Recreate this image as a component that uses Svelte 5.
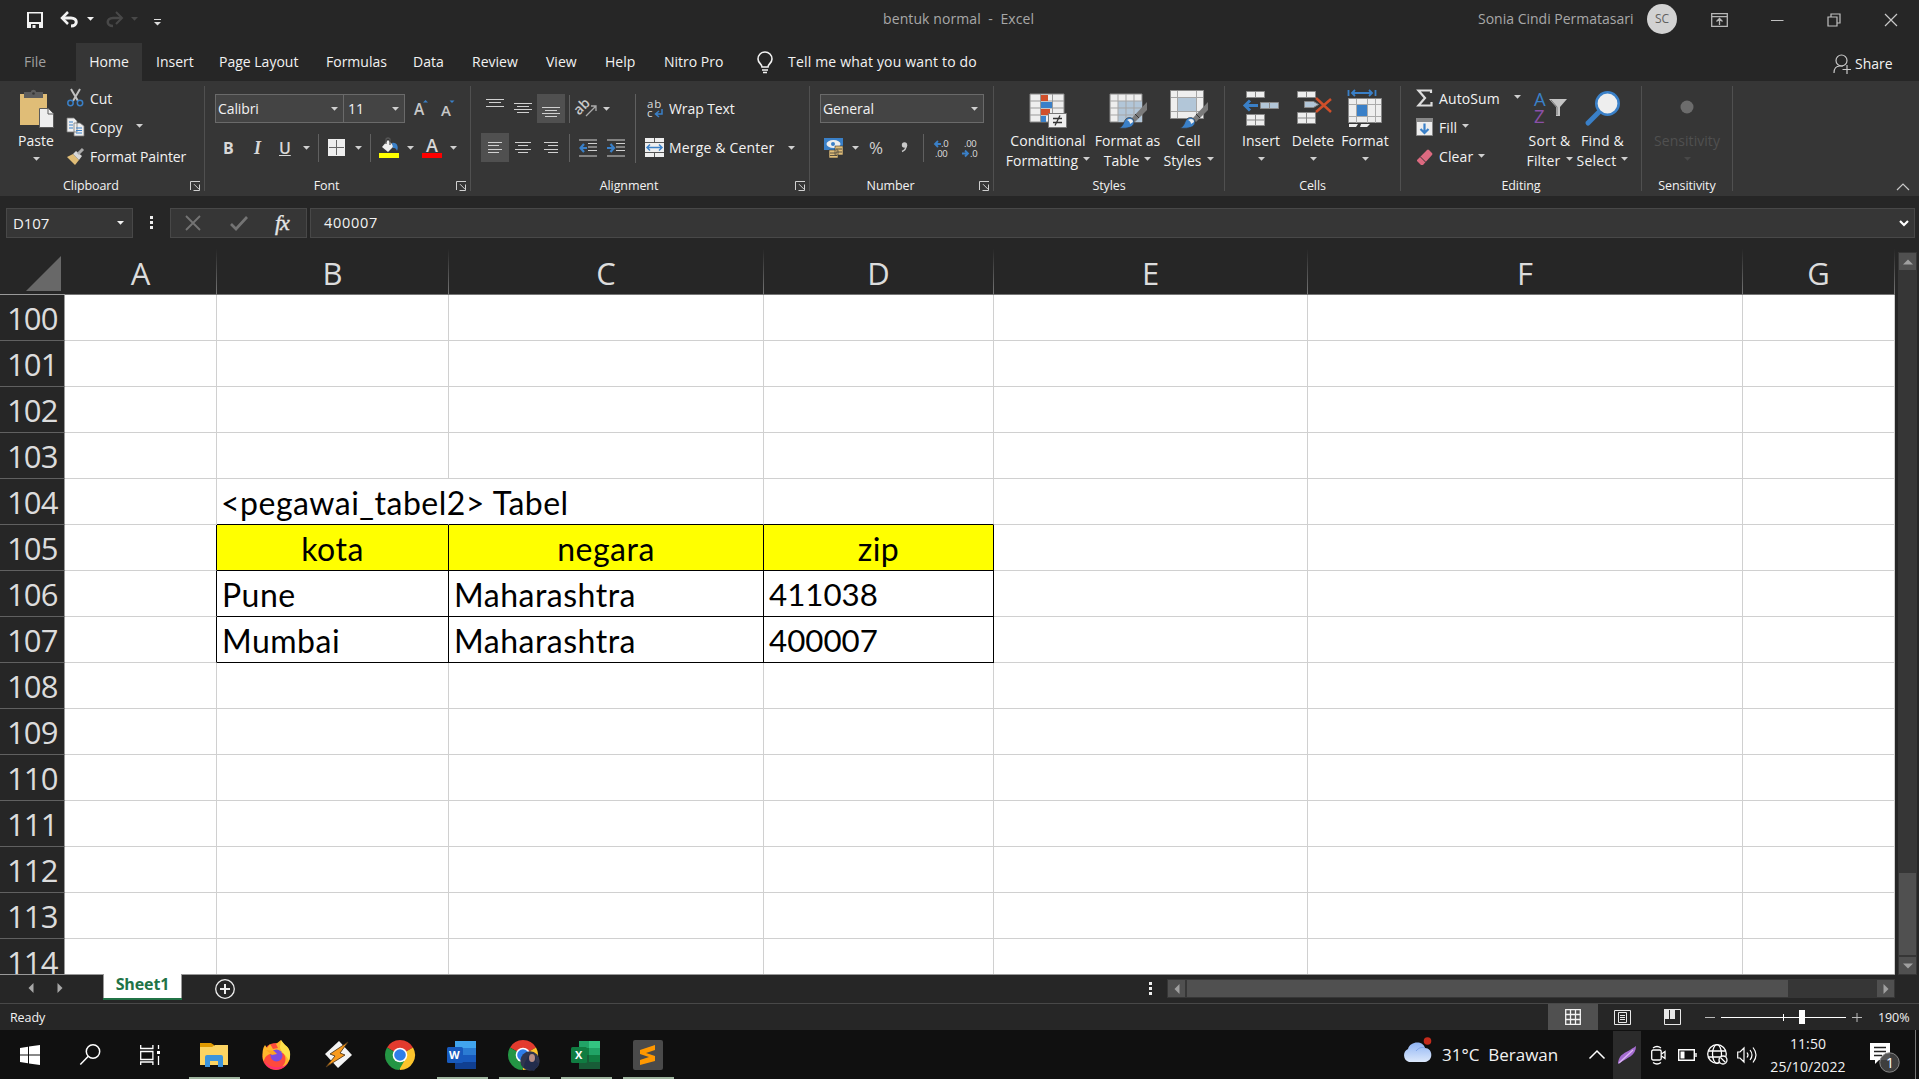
<script>
  const columns = ['A', 'B', 'C', 'D', 'E', 'F', 'G'];
  const rows = Array.from({ length: 15 }, (_, i) => 100 + i);
  const cells = {
    B104: '<pegawai_tabel2> Tabel',
    B105: 'kota', C105: 'negara', D105: 'zip',
    B106: 'Pune', C106: 'Maharashtra', D106: '411038',
    B107: 'Mumbai', C107: 'Maharashtra', D107: '400007'
  };
  const inTable = (c, r) => 'BCD'.includes(c) && r >= 105 && r <= 107;
  const tabs = ['Insert', 'Page Layout', 'Formulas', 'Data', 'Review', 'View', 'Help', 'Nitro Pro'];
</script>

{#snippet caret()}
  <svg class="caret" width="7" height="4" viewBox="0 0 7 4"><path d="M0 0h7L3.5 3.7z" fill="currentColor" /></svg>
{/snippet}

{#snippet launcher()}
  <svg class="launcher" width="11" height="10" viewBox="0 0 11 10" fill="none" stroke="#d0d0d0"><path d="M.5 9V.5H10M4 3.2l5 5M9.5 3.5v6h-6" /></svg>
{/snippet}

{#snippet chrome()}
  <path d="M15 15 2 7.5A15 15 0 0 1 28 7.500z" fill="#e33b2e" />
  <path d="M15 15 28 7.500A15 15 0 0 1 15 30L9 19z" fill="#fcc42c" />
  <path d="M2 7.500A15 15 0 0 0 14 30l7-12-6-3z" fill="#249544" />
  <circle cx="15" cy="15" r="7.300" fill="#fff" /><circle cx="15" cy="15" r="5.800" fill="#2f7de9" />
{/snippet}

{#snippet brush()}
  <path d="M38 12 22 29l4 3L38 20z" fill="#7a7a7a" /><path d="m26 24 4 4" stroke="#363636" />
  <path d="M10 38c5-2 4-6 7-9 3-3 8-1 8 3 0 5-6 7-15 6z" fill="#3a80c8" stroke="#363636" stroke-width=".7" />
  <path d="M18 30c3-2 6-1 6 2l-3 2c0-2-1-3-3-4z" fill="#eee" />
{/snippet}

<div class="app">
  <header class="title">
    <svg width="16" height="16" viewBox="0 0 16 16"><path d="M0 0h16v16H0zM2 1.500v8.500h12V1.500zM4 12v4h1.500v-3h3v3H12v-4z" fill="#f2f2f2" fill-rule="evenodd" /></svg>
    <svg width="19" height="16" viewBox="0 0 19 16" fill="none" stroke="#f2f2f2"><path d="M2 6h9c7 0 7 8 0 8" stroke-width="3" /><path d="M8 0 2 6l6 6" stroke-width="2.500" /></svg>
    {@render caret()}
    <svg width="19" height="16" viewBox="0 0 19 16" fill="none" stroke="#484848"><path d="M17 6H8C1 6 1 14 8 14" stroke-width="2.500" /><path d="m11 0 6 6-6 6" stroke-width="2" /></svg>
    <span class="off">{@render caret()}</span>
    <svg class="more" width="7" height="8" viewBox="0 0 7 8"><path d="M0 .5h7" stroke="#ddd" /><path d="M0 3h7L3.500 6.500z" fill="#ddd" /></svg>
    <span class="doc">bentuk normal&nbsp; -&nbsp; Excel</span>
    <span class="user">Sonia Cindi Permatasari</span>
    <span class="avatar">SC</span>
    <svg width="17" height="14" viewBox="0 0 17 14" fill="none" stroke="#b8b8b8" stroke-width="1.300"><path d="M.7.700h15.600v12.600H.7zM1 3.700h15M8.500 12V6M5.500 8.500l3-3 3 3" /></svg>
    <svg width="13" height="14" viewBox="0 0 13 14"><path d="M0 7.500h12.500" stroke="#c0c0c0" /></svg>
    <svg width="14" height="14" viewBox="0 0 14 14" fill="none" stroke="#c0c0c0" stroke-width="1.200"><path d="M1 4h9v9H1zM4 4V1h9v9h-3" /></svg>
    <svg width="14" height="14" viewBox="0 0 14 14"><path d="m1 1 12 12M13 1 1 13" stroke="#c8c8c8" stroke-width="1.200" /></svg>
  </header>

  <nav class="tabs">
    <span class="file">File</span>
    <span class="active">Home</span>
    {#each tabs as tab}<span>{tab}</span>{/each}
    <svg width="16" height="22" viewBox="0 0 16 22" fill="none" stroke="#f2f2f2" stroke-width="1.600"><path d="M5 15c0-3-4-4-4-8a7 7 0 0 1 14 0c0 4-4 5-4 8zM5 18h6M6 20.500h4" /></svg>
    <span class="tell">Tell me what you want to do</span>
    <svg width="19" height="20" viewBox="0 0 19 20" fill="none" stroke="#c8c8c8" stroke-width="1.200"><circle cx="8.500" cy="6.500" r="5.500" /><path d="M1 19c0-5 3-7 6-7h3M9.500 15.500H18M14 11v9" /></svg>
    <span class="share">Share</span>
  </nav>

  <section class="ribbon">
    <div class="group clipboard">
      <div class="body">
        <div class="big">
          <svg width="38" height="38" viewBox="0 0 38 38"><path d="M3 4h27v31H3z" fill="#e0bd77" /><path d="M7 2h7c0-3 5-3 5 0h7v6H7z" fill="#5d5d5d" /><circle cx="16.500" cy="3.500" r="1.300" fill="#363636" /><path d="M22.500 18.500h9l5 5v14h-14z" fill="#eee" stroke="#5a5a5a" /><path d="M31 18v6h6" fill="none" stroke="#5a5a5a" /></svg>
          <span>Paste</span><span>{@render caret()}</span>
        </div>
        <div class="list">
          <div><svg width="17" height="18" viewBox="0 0 17 18" fill="none"><path d="m4 0 7 12M13 0 6 12" stroke="#c0c0c0" stroke-width="2" /><circle cx="3.500" cy="14" r="2.700" stroke="#3a80c8" stroke-width="1.500" /><circle cx="13" cy="14" r="2.700" stroke="#3a80c8" stroke-width="1.500" /></svg>Cut</div>
          <div><svg width="17" height="18" viewBox="0 0 17 18"><path d="M0 0h7l3 3v11H0zM7 5h6l4 3v10H7z" fill="#eee" stroke="#777" stroke-width=".8" /><path d="M2 4h4M2 7h4M2 10h4M9 10h6M9 12.500h6M9 15h6" stroke="#3a80c8" /></svg>Copy<i class="gap"></i>{@render caret()}</div>
          <div><svg width="17" height="18" viewBox="0 0 17 18"><path d="M0 9 6 6l6 6-4 5z" fill="#e0bd77" /><path d="m6 6 3-3 6 5-3 4z" fill="#d8d8d8" /><path d="m11 6 5-5" stroke="#aaa" stroke-width="3" /></svg>Format Painter</div>
        </div>
      </div>
      <div class="label"><span>Clipboard</span>{@render launcher()}</div>
    </div>

    <div class="group font">
      <div class="body two">
        <div class="line fline1">
          <div class="select">Calibri{@render caret()}</div>
          <div class="select size">11{@render caret()}</div>
          <svg width="15" height="18" viewBox="0 0 15 18"><text x="0" y="15" font-size="15.500" font-weight="600" fill="#c8c8c8">A</text><path d="M9 2.500h5L11.500 0z" fill="#3a80c8" /></svg>
          <svg width="15" height="18" viewBox="0 0 15 18"><text x="0" y="15.500" font-size="15" font-weight="600" fill="#c8c8c8">A</text><path d="M8.500.500h5L11 3z" fill="#3a80c8" /></svg>
        </div>
        <div class="line fline2">
          <b>B</b><em>I</em><u>U</u>{@render caret()}<i class="rule"></i>
          <svg width="17" height="17" viewBox="0 0 17 17"><path d="M0 0h17v17H0z" fill="#eee" /><path d="M8.500 1v15M1 8.500h15" stroke="#666" /></svg>{@render caret()}<i class="rule"></i>
          <svg width="20" height="20" viewBox="0 0 20 20"><path d="m3 9 6-7 6 6-6 6z" fill="#eee" /><path d="M7 6V1q2-2 4 0v6" fill="none" stroke="#555" stroke-width="1.300" /><path d="M13 5c5-1 7 4 5 8-1-3-2-3-4-3z" fill="#3a80c8" /><path d="M0 15h20v5H0z" fill="#ff0" /></svg>{@render caret()}
          <svg width="20" height="20" viewBox="0 0 20 20"><text x="4" y="13.500" font-size="18" font-weight="600" fill="#d8d8d8">A</text><path d="M0 15h20v5H0z" fill="red" /></svg>{@render caret()}
        </div>
      </div>
      <div class="label"><span>Font</span>{@render launcher()}</div>
    </div>

    <div class="group align">
      <div class="body two">
        <div class="split">
          <div>
            <div class="line aline1">
              <svg width="18" height="29" viewBox="0 0 18 29"><path d="M0 5.500h18M3 8.500h12M0 12.500h18" class="s" /></svg>
              <svg width="18" height="29" viewBox="0 0 18 29"><path d="M0 9.500h18M3 12.500h12M0 15.500h18M3 18.500h12" class="s" /></svg>
              <span class="on"><svg width="18" height="29" viewBox="0 0 18 29"><path d="M0 13.500h18M3 16.500h12M0 19.500h18M3 22.500h12" class="s" /></svg></span>
              <i class="rule"></i>
              <svg width="19" height="18" viewBox="0 0 19 18"><text x="-2" y="9.500" font-size="14" transform="rotate(-45 7 9)" font-weight="600" fill="#c8c8c8">ab</text><path d="M8 16 18 6M13 6h5v5" fill="none" stroke="#aaa" stroke-width="1.300" /></svg>
              {@render caret()}
            </div>
            <div class="line aline2">
              <span class="on"><svg width="14" height="12" viewBox="0 0 14 12"><path d="M0 .5h14M0 3.500h11M0 7.500h14M0 10.500h11" class="s" /></svg></span>
              <svg width="16" height="12" viewBox="0 0 16 12"><path d="M0 .5h16M3 3.500h10M0 7.500h16M3 10.500h10" class="s" /></svg>
              <svg width="14" height="12" viewBox="0 0 14 12"><path d="M0 .5h14M4 3.500h10M0 7.500h14M4 10.500h10" class="s" /></svg>
              <i class="rule"></i>
              <svg width="18" height="18" viewBox="0 0 18 18"><path d="M0 1h18M9 4.500h9M9 8h9M9 11.500h9M0 17h18" class="s" /><path d="M8 9H2M5 5 1.500 9 5 13" fill="none" stroke="#3a80c8" stroke-width="2.200" /></svg>
              <svg width="18" height="18" viewBox="0 0 18 18"><path d="M0 1h18M9 4.500h9M9 8h9M9 11.500h9M0 17h18" class="s" /><path d="M0 9h6M3.500 5 7 9l-3.500 4" fill="none" stroke="#3a80c8" stroke-width="2.200" /></svg>
            </div>
          </div>
          <i class="rule tall"></i>
          <div>
            <div class="line wline">
              <svg width="19" height="20" viewBox="0 0 19 20"><text x="2" y="8.500" font-size="11.500" letter-spacing=".8" fill="#ddd">ab</text><text x="2" y="18" font-size="11.500" fill="#ddd">c</text><path d="M17 10v5h-6M14 12l-3.500 3 3.500 3" fill="none" stroke="#3a80c8" stroke-width="1.500" /></svg>
              <span>Wrap Text</span>
            </div>
            <div class="line wline">
              <svg width="19" height="19" viewBox="0 0 19 19"><path d="M0 0h19v19H0z" fill="#eee" /><path d="M0 4.500h19M0 14.500h19M9.500 0v4.500M9.500 14.500V19" stroke="#555" /><path d="M2 9.500h15M5 6.500l-3 3 3 3M14 6.500l3 3-3 3" fill="none" stroke="#3a80c8" stroke-width="1.500" /></svg>
              <span class="merge">Merge &amp; Center</span>{@render caret()}
            </div>
          </div>
        </div>
      </div>
      <div class="label"><span>Alignment</span>{@render launcher()}</div>
    </div>

    <div class="group number">
      <div class="body two">
        <div class="line"><div class="select wide">General{@render caret()}</div></div>
        <div class="line nline">
          <svg width="19" height="20" viewBox="0 0 19 20"><path d="M0 0h19v12H0z" fill="#3a80c8" /><ellipse cx="9.500" cy="6" rx="7" ry="4" fill="#eee" /><circle cx="9" cy="6" r="2" fill="#3a80c8" /><path d="M11 8h8v9h-8zM5 12h9v8H5z" fill="#e0bd77" stroke="#363636" stroke-width=".6" /><path d="M12 11h6M12 14h6M6 15h7M6 17.500h7" stroke="#363636" stroke-width=".8" /></svg>
          {@render caret()}<span class="pct">%</span>
          <svg width="7" height="11" viewBox="0 0 7 11"><circle cx="3.500" cy="3" r="2.700" fill="#c8c8c8" /><path d="M5.500 3Q5 8 1 9.500" fill="none" stroke="#c8c8c8" stroke-width="1.500" /></svg>
          <i class="rule"></i>
          <svg width="16" height="18" viewBox="0 0 16 18"><text x="7" y="8" class="d">.0</text><text x="1" y="17.500" class="d">.00</text><path d="M7 5H1M4 2 1 5l3 3" fill="none" stroke="#3a80c8" stroke-width="1.800" /></svg>
          <svg width="16" height="18" viewBox="0 0 16 18"><text x="2" y="8" class="d">.00</text><text x="8" y="17.500" class="d">.0</text><path d="M0 14.500h6M3 11.500l3 3-3 3" fill="none" stroke="#3a80c8" stroke-width="1.800" /></svg>
        </div>
      </div>
      <div class="label"><span>Number</span>{@render launcher()}</div>
    </div>

    <div class="group styles">
      <div class="body">
        <div class="big">
          <svg width="38" height="38" viewBox="0 0 38 38"><path d="M1 4h34v28H1z" fill="#eee" stroke="#888" /><path d="M1 11h34M1 18h34M1 25h34M11.500 4v28M23.500 4v28" stroke="#999" /><path d="M12 5h7v6h-7zM12 19h9v6h-9z" fill="#d04f2a" /><path d="M12 12h11v6H12zM12 26h5v6h-5z" fill="#3a80c8" /><path d="M19.500 23.500h18v14h-18z" fill="#eee" stroke="#777" /><path d="M24 28.500h9M24 32.500h9M31 25.500l-5 10" stroke="#333" stroke-width="1.300" /></svg>
          <span>Conditional</span><span>Formatting {@render caret()}</span>
        </div>
        <div class="big">
          <svg width="38" height="38" viewBox="0 0 38 38"><path d="M1 4h32v28H1z" fill="#eee" stroke="#888" /><path d="M9 11h24v21H9z" fill="#b2c6d8" /><path d="M1 11h32M1 18h32M1 25h32M9 4v28M17 4v28M25 4v28" stroke="#a5a5a5" />{@render brush()}</svg>
          <span>Format as</span><span>Table {@render caret()}</span>
        </div>
        <div class="big">
          <svg width="38" height="38" viewBox="0 0 38 38"><path d="M.5.500h33v28H.5z" fill="#eee" stroke="#888" /><path d="M1 7.500h32M1 21.500h32M7.500 1v27M26.500 1v27" stroke="#a5a5a5" /><path d="M8 8h18v13H8z" fill="#b2c6d8" />{@render brush()}</svg>
          <span>Cell</span><span>Styles {@render caret()}</span>
        </div>
      </div>
      <div class="label"><span>Styles</span></div>
    </div>

    <div class="group cellsg">
      <div class="body">
        <div class="big">
          <svg width="38" height="38" viewBox="0 0 38 38"><g fill="#eee" stroke="#888"><path d="M4.500 1.500h18v6h-18zM13.500 1.500v6M4.500 24.500h18v11h-18zM13.500 24.500v11M4.500 30h18" /><path d="M18.500 12.500h18v6h-18zM27.500 12.500v6" fill="#b2c6d8" /></g><path d="M16 15.500H4M8 10.500l-5 5 5 5" fill="none" stroke="#3a80c8" stroke-width="3" /></svg>
          <span>Insert</span><span>{@render caret()}</span>
        </div>
        <div class="big">
          <svg width="38" height="38" viewBox="0 0 38 38"><g fill="#eee" stroke="#888"><path d="M3.500 1.500h18v6h-18zM12.500 1.500v6M3.500 22.500h18v11h-18zM12.500 22.500v11M3.500 28h18" /><path d="M10.500 11.500h9l5 3-5 3h-9z" fill="#b2c6d8" /></g><path d="m22 8 15 14M37 9 22 22" fill="none" stroke="#d04f2a" stroke-width="2.500" /></svg>
          <span>Delete</span><span>{@render caret()}</span>
        </div>
        <div class="big">
          <svg width="38" height="38" viewBox="0 0 38 38"><path d="M2.500 8.500h33v24h-33z" fill="#eee" stroke="#888" /><path d="M3 14.500h32M3 26.500h32M10.500 9v24M21.500 9v24M29.500 9v24" stroke="#aaa" /><path d="M11 15h10v11H11z" fill="#3a80c8" /><path d="M3 34h9l-2 3H3zM15 34h9l-3 3h-7z" fill="#eee" /><path d="M2.500 0v6M29.500 0v6M6 3h20M9 0 6 3l3 3M23 0l3 3-3 3" fill="none" stroke="#3a80c8" stroke-width="1.800" /></svg>
          <span>Format</span><span>{@render caret()}</span>
        </div>
      </div>
      <div class="label"><span>Cells</span></div>
    </div>

    <div class="group editing">
      <div class="body">
        <div class="list">
          <div><svg width="17" height="18" viewBox="0 0 17 18"><path d="M15 4V1.500H2.500L9 9l-6.500 7.500H15.500V13" fill="none" stroke="#ddd" stroke-width="2.200" /></svg>AutoSum<i class="gap"></i>{@render caret()}</div>
          <div><svg width="17" height="18" viewBox="0 0 17 18"><path d="M.5.500h16v17H.5z" fill="#eee" stroke="#888" /><path d="M0 0h17v4H0z" fill="#888" /><path d="M8.500 5.500V15M4.500 11l4 4 4-4" fill="none" stroke="#3a80c8" stroke-width="2.200" /></svg>Fill<i class="nudge"></i>{@render caret()}</div>
          <div><svg width="17" height="18" viewBox="0 0 17 18"><path d="m1 12 10-10q1-1 2 0l3 3q1 1 0 2L7 17H5l-4-4z" fill="#dc6a80" /><path d="m4 8.500 6 6" stroke="#363636" /></svg>Clear<i class="nudge"></i>{@render caret()}</div>
        </div>
        <div class="big">
          <svg width="38" height="38" viewBox="0 0 38 38"><text x="3" y="15.500" font-size="18.500" fill="#3a80c8">A</text><text x="3" y="33" font-size="18.500" fill="#8a50a8">Z</text><path d="M18 9h18l-7 8v9h-4v-9z" fill="#c4c4c4" /><path d="m20 10 6 7v8" fill="none" stroke="#777" /></svg>
          <span>Sort &amp;</span><span>Filter {@render caret()}</span>
        </div>
        <div class="big">
          <svg width="38" height="38" viewBox="0 0 38 38"><path d="m4 33 12-12" stroke="#3a80c8" stroke-width="5" stroke-linecap="round" /><circle cx="23.500" cy="13.500" r="11.200" fill="#eee" stroke="#3a80c8" stroke-width="2.600" /></svg>
          <span>Find &amp;</span><span>Select {@render caret()}</span>
        </div>
      </div>
      <div class="label"><span>Editing</span></div>
    </div>

    <div class="group sens">
      <div class="body">
        <div class="big dim">
          <svg width="38" height="38" viewBox="0 0 38 38"><circle cx="19" cy="17" r="6.500" fill="#6c6c6c" /></svg>
          <span>Sensitivity</span><span>{@render caret()}</span>
        </div>
      </div>
      <div class="label"><span>Sensitivity</span></div>
    </div>
    <svg class="collapse" width="14" height="8" viewBox="0 0 14 8"><path d="m1 7 6-6 6 6" fill="none" stroke="#c8c8c8" stroke-width="1.200" /></svg>
  </section>

  <section class="formula">
    <div class="box name">D107{@render caret()}</div>
    <i class="dots"></i>
    <div class="box fx">
      <svg width="16" height="16" viewBox="0 0 16 16"><path d="m1 1 14 14M15 1 1 15" stroke="#747474" stroke-width="1.800" /></svg>
      <svg width="18" height="15" viewBox="0 0 18 15"><path d="m1 8 5 5L17 1" fill="none" stroke="#747474" stroke-width="2.700" /></svg>
      <span>fx</span>
    </div>
    <div class="box value">400007<svg width="10" height="7" viewBox="0 0 10 7"><path d="m1 1 4 4 4-4" fill="none" stroke="#fff" stroke-width="2.200" /></svg></div>
  </section>

  <section class="sheet">
    <div class="grid">
      <div class="corner"><svg width="35" height="35" viewBox="0 0 35 35"><path d="M35 0v35H0z" fill="#686868" /></svg></div>
      {#each columns as c}<div class="colhead">{c}</div>{/each}
      {#each rows as r}
        <div class="rowhead">{r}</div>
        {#each columns as c}
          <div
            class="cell"
            class:table={inTable(c, r)}
            class:head={inTable(c, r) && r === 105}
            class:digits={c === 'D' && r > 105}
            class:edgeleft={c === 'A' && r >= 105 && r <= 107}
            class:edgetop={'BCD'.includes(c) && r === 104}
            class:spill={c === 'B' && r === 104}
          >{cells[c + r] ?? ''}</div>
        {/each}
      {/each}
    </div>
    <div class="vscroll">
      <span class="btn"><svg width="10" height="6" viewBox="0 0 10 6"><path d="M0 5.500h10L5 .5z" fill="#a0a0a0" /></svg></span>
      <span class="thumb"></span>
      <span class="btn"><svg width="10" height="6" viewBox="0 0 10 6"><path d="M0 .5h10L5 5.500z" fill="#a0a0a0" /></svg></span>
    </div>
  </section>

  <section class="sheetbar">
    <svg width="6" height="10" viewBox="0 0 6 10"><path d="M5.500 0v10L.5 5z" fill="#a8a8a8" /></svg>
    <svg width="6" height="10" viewBox="0 0 6 10"><path d="M.5 0v10l5-5z" fill="#a8a8a8" /></svg>
    <span class="stab">Sheet1</span>
    <svg class="add" width="20" height="20" viewBox="0 0 20 20" fill="none" stroke="#eee"><circle cx="10" cy="10" r="9.300" stroke-width="1.300" /><path d="M10 5v10M5 10h10" stroke-width="2" /></svg>
    <i class="dots"></i>
    <div class="hscroll">
      <span class="btn"><svg width="6" height="10" viewBox="0 0 6 10"><path d="M5.500 0v10L.5 5z" fill="#a0a0a0" /></svg></span>
      <span class="thumb"></span>
      <span class="btn"><svg width="6" height="10" viewBox="0 0 6 10"><path d="M.5 0v10l5-5z" fill="#a0a0a0" /></svg></span>
    </div>
  </section>

  <section class="status">
    <span>Ready</span>
    <span class="view"><svg width="16" height="16" viewBox="0 0 16 16"><path d="M.7.700h14.600v14.600H.7zM5.500 0v16M10.500 0v16M0 5.500h16M0 10.500h16" fill="none" stroke="#f2f2f2" stroke-width="1.300" /></svg></span>
    <svg width="17" height="15" viewBox="0 0 17 15" fill="none" stroke="#e8e8e8"><path d="M.5.500h16v14H.5zM4.500 2.500h8v10h-8zM6 5.500h5M6 7.500h5M6 9.500h5" /></svg>
    <svg width="17" height="16" viewBox="0 0 17 16"><path d="M.5.500h16v15H.5z" fill="none" stroke="#e8e8e8" /><path d="M0 0h5v10H0zM6 0h5v10H6z" fill="#e8e8e8" /></svg>
    <svg width="10" height="11" viewBox="0 0 10 11"><path d="M0 5.500h10" stroke="#bbb" /></svg>
    <svg width="125" height="14" viewBox="0 0 125 14"><path d="M0 7.500h125M62.500 4v7" stroke="#fff" /><path d="M78 0h6v14h-6z" fill="#fff" /></svg>
    <svg width="11" height="11" viewBox="0 0 11 11"><path d="M0 5.500h10M5 1v9" stroke="#bbb" /></svg>
    <span class="zoom">190%</span>
  </section>

  <footer class="taskbar">
    <div class="apps">
      <span><svg width="20" height="20" viewBox="0 0 20 20"><path d="M0 3 8 1.800V9.500H0zM9 1.600 20 0v9.500H9zM0 10.500h8v7.700L0 17zM9 10.500h11V20L9 18.400z" fill="#fff" /></svg></span>
      <span><svg width="21" height="21" viewBox="0 0 21 21" fill="none" stroke="#fff" stroke-width="1.500"><circle cx="13" cy="7.500" r="6.700" /><path d="m8.300 12.300-8 8.200" /></svg></span>
      <span><svg width="20" height="20" viewBox="0 0 20 20" fill="none" stroke="#fff" stroke-width="1.300"><path d="M.7 0v3.500h12.200V0M.7 6.500h12.200v8H.7zM.7 20v-3h12.200v3M18.500 0v4M18.500 11v9" /><path d="M17 6h3v3h-3z" fill="#fff" stroke="none" /></svg></span>
      <span class="open"><svg width="28" height="24" viewBox="0 0 28 24"><path d="M0 0h11l3 2v7H0z" fill="#e09a00" /><path d="M0 22V4h12l3-2h13v20z" fill="#fcd462" /><path d="M5 24V14q0-2 2-2h14q2 0 2 2v10h-5v-6h-8v6z" fill="#3c94dc" /></svg></span>
      <span><svg width="30" height="30" viewBox="0 0 30 30"><circle cx="15" cy="16.500" r="13.500" fill="#ff4a3c" /><path d="M2 20C1 11 2 8 4 5l2 3 3-4 3 5 5-1-2-4 5-4c1 5 9 5 9 15 0 7-4 11-8 12 5-5 4-11 1-14-5 3-10-1-15 2-4 2-3 5-5 6z" fill="#ffb62c" /><path d="m20 0 4 5c6 4 6 10 4 16-3-7-9-9-9-14z" fill="#ffe14a" /><circle cx="15.500" cy="15.500" r="6" fill="#7a4be0" /><path d="M3 20c3 8 18 10 24 3-5 8-20 10-24-3z" fill="#ff2f74" /><path d="m5 10 8 1 3 3-5 1z" fill="#ffa51f" /></svg></span>
      <span><svg width="27" height="27" viewBox="0 0 27 27"><path d="M14 0 27 14 13 27 0 13z" fill="#f4f4f4" /><path d="M23 1 5 13l5 2-9 11 19-12-5-2z" fill="#f99a1c" stroke="#543a1c" stroke-width=".9" /></svg></span>
      <span><svg width="30" height="30" viewBox="0 0 30 30">{@render chrome()}</svg></span>
      <span class="open"><svg width="30" height="28" viewBox="0 0 30 28"><path d="M8 0h21v7H8z" fill="#41a5ee" /><path d="M8 7h21v7H8z" fill="#2b7cd3" /><path d="M8 14h21v7H8z" fill="#185abd" /><path d="M8 21h21v7H8z" fill="#103f91" /><rect y="6" width="16" height="16" rx="1.500" fill="#185abd" /><text x="2" y="18" font-size="11" font-weight="700" fill="#fff">W</text></svg></span>
      <span class="open"><svg width="32" height="32" viewBox="0 -1 32 32">{@render chrome()}<circle cx="22" cy="21" r="9.700" fill="#30364f" /><path d="M16 28q0-6 3-9 1-5 6-4 4 1 3 6l3 3-5 7z" fill="#222c4c" /><ellipse cx="24" cy="18" rx="3" ry="4" fill="#b98f86" /></svg></span>
      <span class="open"><svg width="30" height="28" viewBox="0 0 30 28"><path d="M8 0h21v28H8z" fill="#21a366" /><path d="M18 0h11v7H18z" fill="#33c481" /><path d="M8 7h10v7H8z" fill="#107c41" /><path d="M8 14h21v14H8z" fill="#185c37" /><path d="M18 14h11v7H18z" fill="#107c41" /><rect y="6" width="16" height="16" rx="1.500" fill="#107c41" /><text x="4" y="18" font-size="11" font-weight="700" fill="#fff">X</text></svg></span>
      <span class="open"><svg width="30" height="30" viewBox="0 0 30 30"><rect width="30" height="30" rx="2" fill="#4a4a4a" /><path d="M7 10 22 5v5l-9 3 9 3v5L7 25v-5l9-3-9-3z" fill="#ff9800" /></svg></span>
    </div>
    <svg class="cloud" width="32" height="32" viewBox="0 0 32 32"><defs><linearGradient id="sky" x2="0" y2="1"><stop stop-color="#8fb4f4" /><stop offset="1" stop-color="#dce8fb" /></linearGradient></defs><path d="M8 27a7 7 0 0 1-1-13c2-8 15-9 17-1 8 0 9 13 0 14z" fill="url(#sky)" /><path d="M15 16c3-4 7-4 9-3" fill="none" stroke="#7fa4e8" /><circle cx="26.500" cy="6" r="3.800" fill="#c42b1c" /></svg>
    <span class="weather">31°C&nbsp; Berawan</span>
    <svg width="16" height="9" viewBox="0 0 16 9"><path d="m.5 8.500 7.500-7.500 7.500 7.500" fill="none" stroke="#fff" stroke-width="1.500" /></svg>
    <span class="pen"><svg width="20" height="20" viewBox="0 0 20 20"><path d="M1 19C2 8 8 9 19 1c0 10-8 11-18 18z" fill="#a56cd0" /><path d="M2 18 16 5" stroke="#dcb8f4" stroke-width="1.300" /></svg></span>
    <svg width="15" height="20" viewBox="0 0 15 20" fill="none" stroke="#fff" stroke-width="1.300"><rect x=".7" y="5" width="9.500" height="10" rx="1.500" /><path d="m10.500 9 3.500-2.500v7L10.500 11M2 3q4-3 8 0M2 17.500q4 3 8 0" /></svg>
    <svg width="19" height="12" viewBox="0 0 19 12"><path d="M.7.700h15.600v10.600H.7zM18 4v4" fill="none" stroke="#fff" stroke-width="1.400" /><path d="M2.500 2.500h4v7h-4z" fill="#fff" /></svg>
    <svg width="21" height="21" viewBox="0 0 21 21" fill="none" stroke="#fff" stroke-width="1.300"><circle cx="10" cy="10" r="9.300" /><ellipse cx="10" cy="10" rx="4.500" ry="9.300" /><path d="M1 7h18M1 13h18" /><circle cx="16" cy="16" r="4" fill="#101010" /><path d="m13.500 13.500 5 5" /></svg>
    <svg width="21" height="18" viewBox="0 0 21 18" fill="none" stroke="#fff" stroke-width="1.200"><path d="M.7 6H3l4-4v14l-4-4H.7zM10 6.500q2 2.500 0 5M13 4q4 5 0 10M16 1.500q6 7.500 0 15" /></svg>
    <span class="clock"><span>11:50</span><span>25/10/2022</span></span>
    <svg class="note" width="32" height="32" viewBox="0 0 32 32"><path d="M1 1h20v17H10l-4 4v-4H1z" fill="#fff" /><path d="M5 5.500h12M5 9.500h12M5 13.500h8" stroke="#222" stroke-width="1.300" /><circle cx="20.500" cy="20.500" r="9.700" fill="#444" fill-opacity=".9" stroke="#888" /><text x="17" y="25.500" font-size="14" fill="#fff">1</text></svg>
    <i class="desk"></i>
  </footer>
</div>

<style>
  :global(body) { background: #262626; overflow: hidden; }
  .app { width: 1919px; height: 1079px; background: #262626; color: #f2f2f2; font-family: 'Open Sans', 'Noto Sans', sans-serif; font-size: 14px; line-height: 20px; letter-spacing: -0.1px; white-space: nowrap; display: flex; flex-direction: column; overflow: hidden; }
  svg { display: block; flex: none; overflow: visible; }
  .caret { color: #d0d0d0; }
  i { display: block; }

  .title { height: 38px; padding-left: 27px; flex: none; display: grid; align-items: center; grid-template-columns: 33px 27px 18px 26px 23px 729px 595px 169px 64px 60px 56px 57px 20px; color: #a8a8a8; letter-spacing: 0; }
  .title svg { margin-top: 1px; }
  .title .caret { margin-top: -1px; color: #f2f2f2; }
  .off .caret { color: #484848; }
  .title .more { margin-top: 7px; }
  .doc { letter-spacing: .1px; }
  .avatar { width: 30px; height: 30px; border-radius: 50%; background: #d2d2d2; color: #606060; font-size: 12px; line-height: 30px; text-align: center; }

  .tabs { height: 43px; flex: none; padding-left: 24px; display: grid; align-items: center; grid-template-columns: 52px 80px 63px 107px 87px 59px 74px 59px 59px 93px 31px 1045px 22px 60px; letter-spacing: 0; }
  .tabs span { padding-top: 5px; }
  .tabs svg { margin-top: 6px; }
  .tabs .file { color: #a0a0a0; }
  .tabs .active { width: 66px; height: 38px; line-height: 38px; padding: 0; margin-top: 5px; background: #363636; text-align: center; }
  .tabs .tell { letter-spacing: .18px; }
  .tabs .share { padding-top: 9px; }
  .tabs svg:nth-last-child(2) { margin-top: 8px; }

  .ribbon { height: 115px; flex: none; background: #363636; display: flex; }
  .group { display: flex; flex-direction: column; height: 105px; margin-top: 5px; border-right: 1px solid #505050; box-sizing: border-box; flex: none; }
  .body { height: 90px; flex: none; display: flex; }
  .body.two { flex-direction: column; padding-top: 8px; box-sizing: border-box; gap: 10px; }
  .label { display: flex; height: 20px; font-size: 12.500px; position: relative; justify-content: center; }
  .launcher { position: absolute; right: 3px; top: 5px; }
  .clipboard .label, .font .label, .align .label, .number .label { padding-right: 22px; }
  .clipboard { width: 205px; }
  .font { width: 266px; }
  .align { width: 339px; }
  .number { width: 184px; }
  .styles { width: 231px; }
  .cellsg { width: 176px; }
  .editing { width: 241px; }
  .sens { width: 91px; }

  .big { display: flex; flex-direction: column; align-items: center; padding-top: 4px; letter-spacing: .05px; }
  .big svg:first-child { margin-bottom: 3px; }
  .big span { display: flex; align-items: center; justify-content: center; gap: 5px; height: 20px; }
  .big span .caret { margin: -4px 0 0; }
  .dim { color: #505050; }
  .dim .caret { color: #484848; }
  .clipboard .big { width: 40px; margin-left: 16px; }
  .clipboard .list { margin-left: 11px; }
  .list { margin-top: -2px; }
  .list div { display: flex; align-items: center; height: 29.300px; }
  .list div > svg:first-child { margin-right: 6px; margin-top: -1px; }
  .list .caret { margin-top: -3px; }
  .list .gap { width: 14px; }
  .list .nudge { width: 5px; }
  .styles .body { padding-left: 8px; }
  .styles .big:nth-child(1) { width: 92px; }
  .styles .big:nth-child(2) { width: 67px; }
  .styles .big:nth-child(3) { width: 55px; }
  .cellsg .body { padding-left: 10px; }
  .cellsg .big { width: 52px; }
  .editing .list { width: 107px; padding-left: 15px; letter-spacing: .1px; }
  .editing .big { width: 53px; letter-spacing: .2px; }
  .sens .big { width: 90px; }

  .line { display: grid; align-items: center; height: 29px; }
  .fline1 { padding-left: 10px; grid-template-columns: 128px 71px 27px 16px; }
  .fline2 { padding-left: 18px; grid-template-columns: 29px 27px 24px 15px 10px 27px 15px 9px 28px 15px 28px 8px; }
  .fline2 b, .fline2 em, .fline2 u { font-size: 16px; font-weight: 700; color: #d8d8d8; }
  .fline2 em { font-family: 'Liberation Serif', serif; font-size: 18px; padding-left: 2px; }
  .fline2 u { font-weight: 600; }
  .select { height: 29px; width: 129px; box-sizing: border-box; border: 1px solid #6a6a6a; background: #444; display: flex; align-items: center; justify-content: space-between; padding: 0 5px 0 2px; }
  .select.size { width: 62px; padding-left: 4px; }
  .select.wide { width: 164px; margin-left: 10px; }
  .rule { width: 1px; height: 28px; background: #606060; }
  .rule.tall { height: 69px; }
  .split { display: flex; }
  .split > div { display: flex; flex-direction: column; gap: 10px; }
  .split > div:first-child { width: 164px; }
  .split > div:last-child { padding-left: 9px; }
  .s { stroke: #d0d0d0; fill: none; }
  .d { font-size: 9.500px; fill: #ddd; letter-spacing: -0.3px; }
  .aline1 { padding-left: 15px; grid-template-columns: 28px 23px 32px 9px 25px 10px; }
  .aline2 { padding-left: 10px; grid-template-columns: 34px 29px 25px 10px 28px 20px; }
  .on { width: 28px; height: 29px; background: #505050; display: flex; align-items: center; justify-content: center; }
  .wline { grid-template-columns: 24px 119px 10px; }
  .merge { letter-spacing: .18px; }
  .nline { padding-left: 14px; grid-template-columns: 28px 17px 32px 22px 11px 28px 16px; }
  .pct { font-size: 17px; color: #d0d0d0; }
  .collapse { margin: 102px 0 0 163px; }

  .formula { height: 30px; margin-top: 12px; padding-left: 6px; flex: none; display: flex; }
  .box { box-sizing: border-box; height: 30px; border: 1px solid #484848; background: #363636; display: flex; align-items: center; font-size: 14.500px; }
  .name { width: 127px; padding: 0 8px 0 6px; justify-content: space-between; font-size: 15px; }
  .name .caret { color: #f2f2f2; }
  .dots { width: 3px; height: 13px; background: repeating-linear-gradient(#eee 0 3px, transparent 3px 5px); }
  .formula .dots { margin: 8px 17px 0; }
  .fx { width: 137px; padding-left: 14px; gap: 29px; }
  .fx span { font-family: 'Liberation Serif', serif; font-style: italic; font-size: 22px; margin-left: -2px; letter-spacing: -1px; color: #e4e4e4; -webkit-text-stroke: .4px #e4e4e4; }
  .value { width: 1605px; margin-left: 3px; padding: 0 5px 0 13px; justify-content: space-between; letter-spacing: .7px; }

  .sheet { display: flex; height: 737px; flex: none; }
  .grid { width: 1895px; height: 736px; flex: none; display: grid; grid-template-columns: 65px 152px 232px 315px 230px 314px 435px 152px; grid-template-rows: 57px; grid-auto-rows: 46px; overflow: hidden; border-bottom: 1px solid #999; }
  .corner { border-bottom: 1px solid #999; display: flex; align-items: flex-end; justify-content: flex-end; padding: 0 4px 3px 0; }
  .colhead { border-bottom: 1px solid #999; border-right: 1px solid; border-image: linear-gradient(#262626 20%, #777) 1; font-size: 31px; line-height: 40px; padding-top: 15px; box-sizing: border-box; text-align: center; color: #dcdcdc; letter-spacing: 0; }
  .rowhead { box-sizing: border-box; border-right: 1px solid #999; border-bottom: 1px solid #606060; color: #dcdcdc; font-size: 31px; line-height: 46px; letter-spacing: -0.9px; text-align: right; padding-right: 6.500px; }
  .cell { box-sizing: border-box; border-right: 1px solid #d0d0d0; border-bottom: 1px solid #d0d0d0; background: #fff; color: #000; font-family: Lato, sans-serif; font-size: 32px; line-height: 47px; padding-left: 5px; letter-spacing: .5px; }
  .cell.digits { font-size: 31.300px; letter-spacing: 0; }
  .cell.table { border-color: #000; }
  .cell.head { background: #ff0; text-align: center; padding-left: 0; }
  .cell.edgeleft { border-right-color: #000; }
  .cell.edgetop { border-bottom-color: #000; }
  .cell.spill { border-right-color: transparent; position: relative; padding-left: 4px; }
  .vscroll { margin: 14px 0 0 3px; width: 19px; box-sizing: border-box; height: 723px; background: #363636; padding: 1px; display: flex; flex-direction: column; }
  .btn { width: 17px; height: 17px; background: #505050; display: flex; align-items: center; justify-content: center; flex: none; }
  .vscroll .thumb { margin: 603px 0 2px; height: 82px; background: #505050; }

  .sheetbar { height: 28px; flex: none; border-bottom: 1px solid #484848; display: flex; align-items: flex-start; padding-left: 28px; }
  .sheetbar > svg { margin-top: 8px; margin-right: 23px; }
  .stab { margin: -1px 0 0 17px; box-sizing: border-box; width: 79px; height: 26px; background: #fff; border: solid #217346; border-width: 0 0 2px; box-shadow: inset 1px 0 #999, inset -1px 0 #999; color: #217346; font-size: 16px; font-weight: 700; line-height: 21px; text-align: center; }
  .sheetbar .add { margin: 4px 914px 0 33px; }
  .sheetbar > .dots { margin: 7px 15px 0 0; }
  .hscroll { margin-top: 4px; width: 728px; height: 19px; box-sizing: border-box; background: #363636; padding: 1px; display: flex; }
  .hscroll .thumb { margin: 0 89px 0 2px; width: 601px; background: #505050; height: 17px; }

  .status { height: 26px; flex: none; display: grid; align-items: center; padding-left: 10px; font-size: 12.500px; grid-template-columns: 1538px 66px 50px 41px 16px 131px 26px 40px; }
  .status > span:first-child, .zoom { padding-top: 1px; }
  .view { width: 50px; height: 26px; background: #505050; display: flex; align-items: center; justify-content: center; }
  .zoom { letter-spacing: -0.1px; }

  .taskbar { height: 49px; flex: none; background: #101010; display: flex; align-items: center; }
  .apps { width: 1401px; height: 49px; flex: none; display: grid; grid-template-columns: 60px 60px 63px 62px 62px 62px 62px 62px 62px 62px 62px; }
  .apps span { display: flex; align-items: center; justify-content: center; box-sizing: border-box; }
  .apps span:nth-child(3) { padding-right: 3px; }
  .apps .open { background: linear-gradient(#9fb59f, #9fb59f) 50% 100% / 51px 2px no-repeat; }
  .cloud { margin-top: -8px; }
  .weather { width: 147px; margin-left: 9px; padding-top: 1px; font-size: 17px; letter-spacing: 0; }
  .pen { width: 28px; height: 48px; background: #2b2b2b; margin: 1px 10px 0 8px; display: flex; align-items: center; justify-content: center; }
  .pen + svg { margin-right: 12px; }
  .pen + svg + svg { margin-right: 10px; }
  .pen + svg + svg + svg { margin-right: 9px; }
  .clock { width: 100px; display: flex; flex-direction: column; align-items: center; line-height: 23px; letter-spacing: .1px; }
  .note { margin: 6px 0 0 11px; }
  .desk { width: 1px; height: 49px; background: #777; margin-left: 14px; }
</style>
